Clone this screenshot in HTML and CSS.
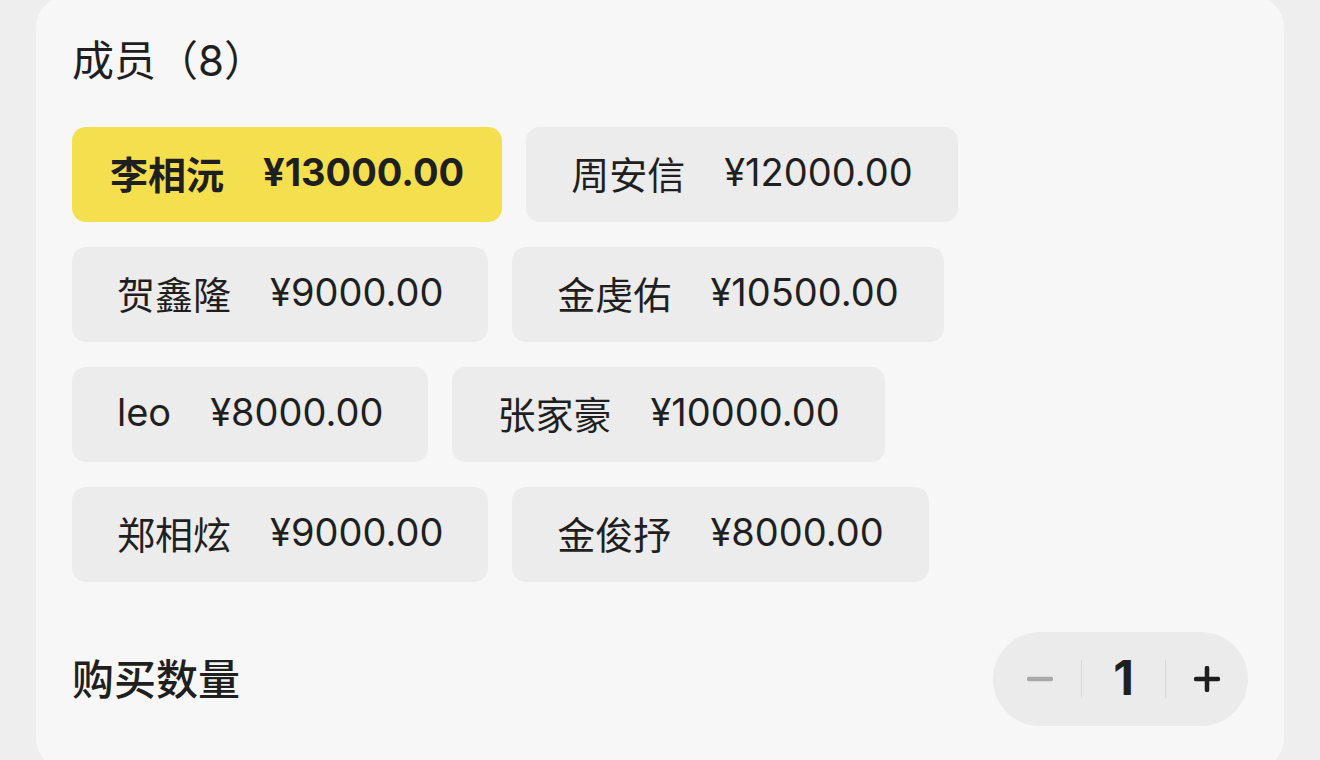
FILE: index.html
```html
<!DOCTYPE html>
<html lang="zh">
<head>
   <meta charset="utf-8">
   <title>成员</title>
   <link rel="stylesheet" href="styles.css">
</head>
<body>

   <!-- Member picker card -->
   <div class="card">
      <h2 class="title">成员（8）</h2>

      <div class="members">
         <div class="chip active"><span class="name">李相沅</span><span class="price">¥13000.00</span></div>
         <div class="chip"><span class="name">周安信</span><span class="price">¥12000.00</span></div>
         <div class="chip"><span class="name">贺鑫隆</span><span class="price">¥9000.00</span></div>
         <div class="chip"><span class="name">金虔佑</span><span class="price">¥10500.00</span></div>
         <div class="chip"><span class="name">leo</span><span class="price">¥8000.00</span></div>
         <div class="chip"><span class="name">张家豪</span><span class="price">¥10000.00</span></div>
         <div class="chip"><span class="name">郑相炫</span><span class="price">¥9000.00</span></div>
         <div class="chip"><span class="name">金俊抒</span><span class="price">¥8000.00</span></div>
      </div>

      <!-- Quantity row -->
      <div class="qty-row">
         <div class="qty-label">购买数量</div>
         <div class="stepper">
            <button class="step minus">
               <svg width="26" height="26" viewBox="0 0 26 26"><line x1="2" y1="13" x2="24" y2="13" stroke="#a9a9a9" stroke-width="4.5" stroke-linecap="round"/></svg>
            </button>
            <span class="count">1</span>
            <button class="step plus">
               <svg width="26" height="26" viewBox="0 0 26 26"><line x1="2" y1="13" x2="24" y2="13" stroke="#1e1e1e" stroke-width="4.5" stroke-linecap="round"/><line x1="13" y1="2" x2="13" y2="24" stroke="#1e1e1e" stroke-width="4.5" stroke-linecap="round"/></svg>
            </button>
         </div>
      </div>
   </div>

</body>
</html>
```

FILE: styles.css
```css
* {
   margin: 0;
   padding: 0;
   box-sizing: border-box;
   font-family: Inter, "Noto Sans CJK SC", sans-serif;
}

html, body {
   height: 100%;
   overflow: hidden;
}

body {
   background: #eeeeee;
   color: #1f1f1f;
}

/* Main card */
.card {
   margin: -4px 36px 0;
   padding: 36px 36px 44px;
   background: #f7f7f7;
   border-radius: 32px;
}

.title {
   font-size: 42px;
   font-weight: 400;
   line-height: 58px;
}

/* Member chips */
.members {
   display: flex;
   flex-wrap: wrap;
   gap: 25px 24px;
   margin-top: 37px;
   width: 900px;
}

.chip {
   display: flex;
   align-items: center;
   height: 95px;
   padding: 0 45px 5px;
   background: #ececec;
   border-radius: 14px;
   font-size: 38px;
}

.chip .price {
   margin-left: 39px;
}

.chip.active {
   background: #f4e04e;
   font-weight: 700;
   padding: 0 38px 5px;
}

/* Quantity */
.qty-row {
   display: flex;
   justify-content: space-between;
   align-items: center;
   margin-top: 50px;
}

.qty-label {
   font-size: 42px;
   font-weight: 500;
   padding-bottom: 6px;
}

.stepper {
   display: flex;
   align-items: center;
   width: 255px;
   height: 94px;
   border-radius: 47px;
   background: #ebebeb;
}

.step {
   flex: 1;
   height: 100%;
   border: 0;
   background: none;
   display: flex;
   align-items: center;
   justify-content: center;
}

.step.minus {
   padding-left: 6px;
}

.count {
   flex: 1;
   text-align: center;
   font-size: 48px;
   font-weight: 700;
   border-left: 1px solid #d8d8d8;
   border-right: 1px solid #d8d8d8;
   line-height: 36px;
   padding-bottom: 2px;
}
```
